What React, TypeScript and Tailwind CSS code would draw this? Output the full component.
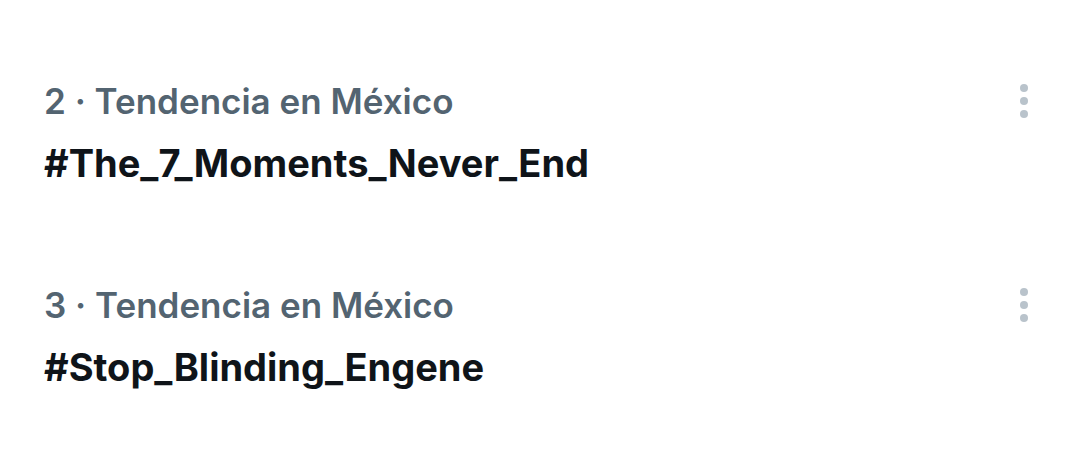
import { useState } from 'react';

type Trend = { rank: number; place: string; name: string };

const trends: Trend[] = [
  { rank: 2, place: 'Tendencia en México', name: '#The_7_Moments_Never_End' },
  { rank: 3, place: 'Tendencia en México', name: '#Stop_Blinding_Engene' },
];

function MoreDots() {
  return (
    <svg width="12" height="40" viewBox="0 0 12 40" className="text-[#b9c3cb]">
      <circle cx="6" cy="7" r="4" fill="currentColor" />
      <circle cx="6" cy="20" r="4" fill="currentColor" />
      <circle cx="6" cy="33" r="4" fill="currentColor" />
    </svg>
  );
}

export default function App() {
  const [open, setOpen] = useState<number | null>(null);

  return (
    <div className="h-[464px] w-[1080px] bg-white pt-[77px] pl-[44px] pr-[50px] font-['Inter',sans-serif]">
      <div className="flex flex-col gap-[90px]">
        {trends.map((t) => (
          <div key={t.rank} className="flex items-start justify-between">
            <div className="flex flex-col gap-[10px]">
              <span className="text-[35px] leading-[48px] font-semibold text-[#536471]">
                {t.rank} · {t.place}
              </span>
              <span className="text-[38px] leading-[56px] font-bold text-[#0f1419]">
                {t.name}
              </span>
            </div>
            <button
              type="button"
              onClick={() => setOpen(open === t.rank ? null : t.rank)}
              className="mt-[4px]"
            >
              <MoreDots />
            </button>
          </div>
        ))}
      </div>
    </div>
  );
}
